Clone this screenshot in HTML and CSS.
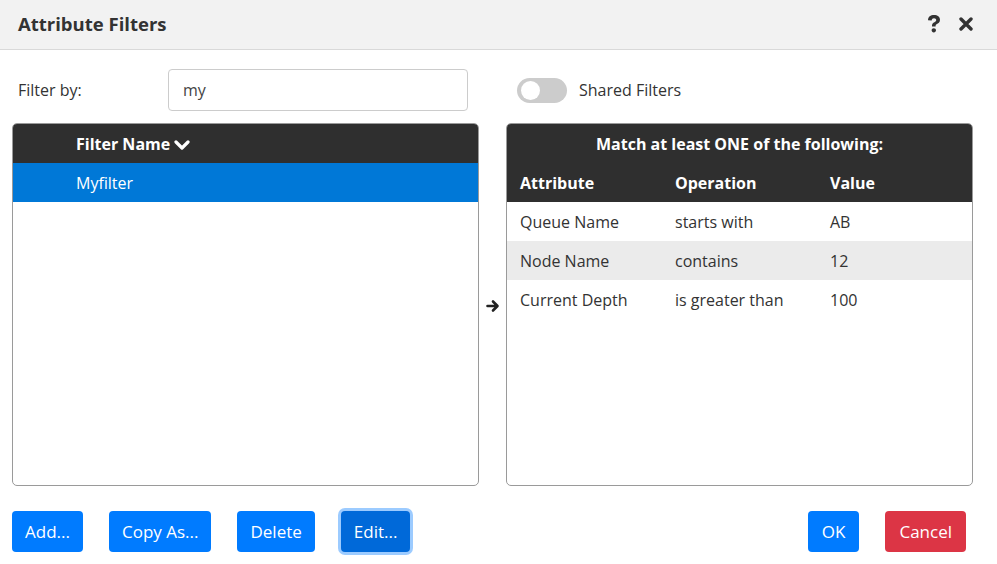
FILE: index.html
```html
<!DOCTYPE html>
<html>
<head>
<meta charset="utf-8">
<link rel="stylesheet" href="styles.css">
</head>
<body>
<div class="dialog">
  <div class="header">
    <div class="title">Attribute Filters</div>
    <div class="header-icons">
      <svg class="icon-q" viewBox="0 0 14 19" width="14" height="19"><path d="M1 6.2 C1 2.8 3.6 1 7 1 C10.6 1 13 3 13 5.8 C13 8.4 11.2 9.4 9.6 10.3 C8.8 10.8 8.6 11.2 8.6 12 L8.6 12.6 L5 12.6 L5 11.6 C5 9.8 6 9 7.4 8.2 C8.6 7.5 9.2 7 9.2 6 C9.2 5 8.3 4.3 7 4.3 C5.6 4.3 4.8 5.1 4.7 6.6 Z M6.8 14.2 C8.1 14.2 9 15.1 9 16.3 C9 17.5 8.1 18.4 6.8 18.4 C5.5 18.4 4.6 17.5 4.6 16.3 C4.6 15.1 5.5 14.2 6.8 14.2 Z" fill="#333"/></svg>
      <svg class="icon-x" viewBox="0 0 14 14" width="14" height="14"><path d="M2 2 L12 12 M12 2 L2 12" stroke="#333" stroke-width="3.4" stroke-linecap="round"/></svg>
    </div>
  </div>

  <div class="filter-row">
    <label class="filter-label">Filter by:</label>
    <div class="filter-input">my</div>
    <div class="toggle-wrap">
      <div class="toggle"><div class="knob"></div></div>
      <span class="toggle-label">Shared Filters</span>
    </div>
  </div>

  <div class="tables">
    <div class="panel">
      <div class="left-head">
        <span>Filter Name</span>
        <svg class="chev" viewBox="0 0 16 12" width="16" height="12"><path d="M2 3 L8 9 L14 3" fill="none" stroke="#fff" stroke-width="3.2" stroke-linecap="round" stroke-linejoin="round"/></svg>
      </div>
      <div class="left-row selected">Myfilter</div>
    </div>

    <div class="arrow-col">
      <svg viewBox="0 0 14 14" width="14" height="14"><path d="M1.5 7 H11 M7 2.5 L11.5 7 L7 11.5" fill="none" stroke="#222" stroke-width="2.6" stroke-linecap="round" stroke-linejoin="round"/></svg>
    </div>

    <div class="panel">
      <div class="right-title">Match at least ONE of the following:</div>
      <div class="grid-row grid-head">
        <div>Attribute</div><div>Operation</div><div>Value</div>
      </div>
      <div class="grid-row">
        <div>Queue Name</div><div>starts with</div><div>AB</div>
      </div>
      <div class="grid-row alt">
        <div>Node Name</div><div>contains</div><div>12</div>
      </div>
      <div class="grid-row">
        <div>Current Depth</div><div>is greater than</div><div>100</div>
      </div>
    </div>
  </div>

  <div class="footer">
    <div class="btn-group left">
      <button class="btn">Add...</button>
      <button class="btn">Copy As...</button>
      <button class="btn">Delete</button>
      <button class="btn focused">Edit...</button>
    </div>
    <div class="btn-group right">
      <button class="btn">OK</button>
      <button class="btn danger">Cancel</button>
    </div>
  </div>
</div>
</body>
</html>
```

FILE: styles.css
```css
* { box-sizing: border-box; }
body {
  margin: 0;
  font-family: "Segoe UI", "Open Sans", "Noto Sans", sans-serif;
  font-size: 16px;
  color: #333;
  background: #fff;
}
.dialog {
  width: 997px;
  height: 564px;
  background: #fff;
  overflow: hidden;
}
.header {
  height: 50px;
  background: #f2f2f2;
  border-bottom: 1px solid #d9d9d9;
  display: flex;
  align-items: center;
  justify-content: space-between;
  padding: 0 24px 0 18px;
}
.title {
  font-weight: 700;
  font-size: 18.5px;
  color: #333;
  margin-top: -2px;
}
.header-icons {
  display: flex;
  align-items: center;
  gap: 18px;
  margin-top: -2px;
}
.icon-q { display: block; }
.icon-x { display: block; margin-top: 1px; }

.filter-row {
  display: flex;
  align-items: center;
  padding: 19px 0 0 18px;
}
.filter-label {
  width: 150px;
  color: #333;
}
.filter-input {
  width: 300px;
  height: 42px;
  border: 1px solid #ccc;
  border-radius: 4px;
  padding: 0 14px;
  display: flex;
  align-items: center;
  color: #444;
}
.toggle-wrap {
  display: flex;
  align-items: center;
  margin-left: 49px;
  gap: 12px;
}
.toggle {
  width: 50px;
  height: 25px;
  border-radius: 13px;
  background: #ccc;
  position: relative;
}
.knob {
  position: absolute;
  left: 4px;
  top: 3px;
  width: 19px;
  height: 19px;
  border-radius: 50%;
  background: #fff;
}

.tables {
  display: flex;
  margin: 12px 0 0 12px;
  height: 363px;
}
.panel {
  width: 467px;
  border: 1px solid #9a9a9a;
  border-radius: 5px;
  overflow: hidden;
}
.left-head {
  height: 39px;
  background: #2f2f2f;
  color: #fff;
  font-weight: 700;
  display: flex;
  align-items: center;
  gap: 4px;
  padding-left: 63px;
}
.chev { display: block; margin-top: 2px; }
.left-row {
  height: 39px;
  display: flex;
  align-items: center;
  padding-left: 63px;
}
.left-row.selected {
  background: #0078d7;
  color: #fff;
}
.arrow-col {
  width: 27px;
  display: flex;
  align-items: center;
  justify-content: center;
  padding-top: 3px;
}
.right-title {
  height: 39px;
  background: #2f2f2f;
  color: #fff;
  font-weight: 700;
  display: flex;
  align-items: center;
  justify-content: center;
}
.grid-row {
  display: grid;
  grid-template-columns: 155px 155px 1fr;
  height: 39px;
  align-items: center;
  padding-left: 13px;
}
.grid-head {
  background: #2f2f2f;
  color: #fff;
  font-weight: 700;
}
.grid-row.alt { background: #ebebeb; }

.footer {
  display: flex;
  justify-content: space-between;
  padding: 0 31px 0 12px;
  margin-top: 25px;
}
.btn-group {
  display: flex;
  gap: 26px;
}
.btn {
  font-family: inherit;
  font-size: 17px;
  height: 41px;
  padding: 0 14px;
  border: none;
  border-radius: 4px;
  background: #007bff;
  color: #fff;
  cursor: pointer;
}
.btn-group.left .btn { padding: 0 13px; }
.btn.focused {
  background: #0069d9;
  box-shadow: 0 0 0 3px #9ccbff;
}
.btn.danger { background: #dc3545; }
```
